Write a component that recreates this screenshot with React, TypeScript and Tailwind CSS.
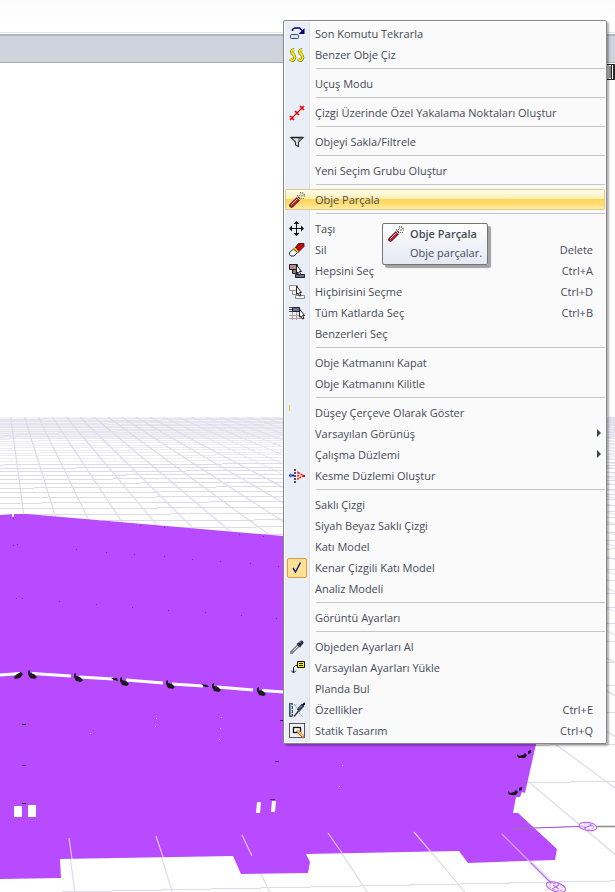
import React from 'react';

interface MenuItem {
  label: string;
  icon?: React.ReactNode;
  shortcut?: string;
  submenu?: boolean;
  checked?: boolean;
  active?: boolean;
}

function Icon({ children }: { children: React.ReactNode }) {
  return (
    <svg viewBox="0 0 16 16" className="size-4 shrink-0" fill="none" aria-hidden="true">
      {children}
    </svg>
  );
}

const RepeatIcon = () => (
  <Icon>
    <path d="M3.500 5V3.500L5.500 2h5L13 4.500" stroke="#00007b" strokeWidth="1.500" />
    <path d="M15.500 2v6H9.500z" fill="#00007b" />
    <rect x="1.500" y="8.500" width="8" height="4" rx="1" fill="#d5e3f2" stroke="#34506f" />
  </Icon>
);

const SimilarIcon = () => (
  <Icon>
    {[0, 8].map(x => (
      <g key={x} transform={`translate(${x} 0)`}>
        <path d="M5 2.500C2.500 3 2 5 3.500 6.500S6.500 9 5.500 11.500 3 14 1 12" stroke="#5c5c20" strokeWidth="3" />
        <path d="M5 2.500C2.500 3 2 5 3.500 6.500S6.500 9 5.500 11.500 3 14 1 12" stroke="#fff200" strokeWidth="1.800" />
      </g>
    ))}
  </Icon>
);

const SnapIcon = () => (
  <Icon>
    <path d="M1 15 15 1" stroke="#222" />
    <path d="M1 11l4 4M1 15l4-4M6 6l4 4M6 10l4-4M11 1l4 4M11 5l4-4" stroke="#f00000" strokeWidth="1.600" />
  </Icon>
);

const FilterIcon = () => (
  <Icon>
    <path d="M2 3.500h12L9.500 8v4.500L6.500 11V8z" fill="#dfe5e2" stroke="#3a3a44" strokeWidth="1.200" />
    <path d="M9 4l4 0L9 8z" fill="#8b93a0" />
    <path d="M2 3.500h12" stroke="#222" strokeWidth="1.500" />
  </Icon>
);

const ExplodeIcon = () => (
  <Icon>
    <path d="M2.500 13.500 9 7" stroke="#3a0a10" strokeWidth="4.500" strokeLinecap="round" />
    <path d="M2.500 13.500 9 7" stroke="#d02435" strokeWidth="2.800" strokeLinecap="round" />
    <path d="M2.500 12.500 8 7" stroke="#f7c4c6" />
    <path d="M8 5l3 3" stroke="#eee" />
    <path d="M8 3l1 1M11 0l1 1M10 4l1-1M14 0l-1 2M16 2l-2 1M12 4l2 0M14 6l1 1M11 2l1 0M12 6l1 1M15 4l1 0" stroke="#6f6b62" />
  </Icon>
);

const MoveIcon = () => (
  <Icon>
    <path d="M7.500 2v12M2 7.500h12" stroke="#111" />
    <path d="M7.500 0l3 3h-6zM7.500 15l3-3h-6zM0 7.500l3-3v6zM15 7.500l-3-3v6z" fill="#111" />
  </Icon>
);

const EraserIcon = () => (
  <Icon>
    <path d="M9.500 1.500H15v3L8.500 11 5 7z" fill="#f00000" stroke="#111" strokeWidth=".8" />
    <path d="M6.500 6.500 11.500 2M8 8.500l6.500-6" stroke="#300" strokeWidth=".9" />
    <path d="M4.500 7 6 5.500 9.500 9.500 8.500 11z" fill="#ffe800" />
    <path d="M.5 10.500 4.500 7l4 3.500-3.500 3.500H2L.5 12.500z" fill="#fff" stroke="#111" strokeWidth=".9" />
  </Icon>
);

function SelectIcon({ filled }: { filled?: boolean }) {
  const line = filled ? '#222' : '#8f8f8f';
  return (
    <Icon>
      <path d="M.5 1.500h8v5h-8z" fill={filled ? '#b98a94' : '#f4f4f4'} stroke={line} />
      <path d="M3.500 6.500h5v4h-5z" fill={filled ? '#9c7684' : '#f4f4f4'} stroke={line} />
      <path d="M6.500 11.500h9v3h-9z" fill={filled ? '#6a6d9c' : '#f4f4f4'} stroke={line} />
      <path d="M7.500 2v8l1.500-1 1.500 3 1.500-.5-1.500-3h2z" fill="#fff" stroke="#111" strokeWidth=".9" />
    </Icon>
  );
}

const FloorsIcon = () => (
  <Icon>
    <path d="M0 6.500h12M0 10.500h12M3.500 7v8M7.500 7v8M11.500 7v6M0 13.500h13" stroke="#b59a9a" />
    <path d="M3.500 2.500h7v4h-7z" fill="#6a6d9c" stroke="#222" />
    <path d="M0 2.500h3M0 4.500h3M0 6.500h3" stroke="#444" />
    <path d="M10.500 4v8l1.500-1 1.500 3 1.500-.5-1.500-3h2z" fill="#fff" stroke="#111" strokeWidth=".9" />
  </Icon>
);

const SectionIcon = () => (
  <Icon>
    <path d="M0 7.500h5" stroke="#0020e0" strokeWidth="2" />
    <path d="M1 5v5L3 7.500z" fill="#5f7be0" />
    <path d="M6 1v14" stroke="#111" strokeWidth="1.400" strokeDasharray="2 1" />
    <path d="M9 4.500 14.500 7.500 9 11z" stroke="#f01818" strokeWidth="1.400" strokeDasharray="2 1" fill="#fbd9d9" />
    <rect x="14" y="7" width="2" height="2" fill="#e00000" />
  </Icon>
);

const CheckIcon = () => (
  <span className="flex size-5 items-center justify-center rounded-xs border border-[#f29536] bg-[#ffe294]">
    <Icon>
      <path d="M4 8 6.500 12 11.500 2.500" stroke="#1f2a80" strokeWidth="1.600" />
    </Icon>
  </span>
);

const PickIcon = () => (
  <Icon>
    <path d="M2.500 13.500 9 7" stroke="#333" strokeWidth="2.800" />
    <path d="M3 13 9.500 6.500" stroke="#f4f4f4" strokeWidth="1.200" />
    <path d="M8 4.500 11.500 8" stroke="#111" strokeWidth="1.200" />
    <path d="M10.500 5.500 12.500 3.500" stroke="#25304e" strokeWidth="4" strokeLinecap="round" />
    <path d="M10.500 4 12 2.500" stroke="#9aa7c4" />
    <rect x="1" y="12" width="3" height="3" fill="#888" />
  </Icon>
);

const LoadIcon = () => (
  <Icon>
    <path d="M8.500 1.500h7v6h-7z" fill="#fff000" stroke="#111" />
    <path d="M10 3.500h4M10 5.500h4" stroke="#111" />
    <path d="M8 5.500H6.500L4.500 7.500v5M2 10.500l2.500 2.500L7 10.500" stroke="#111" />
  </Icon>
);

const PropertiesIcon = () => (
  <Icon>
    <path d="M.5 1.500h3v13h-3z" fill="#7c93a9" stroke="#3b5168" />
    <path d="M2 3.500h2M2 5.500h1M2 7.500h2M2 9.500h1M2 11.500h2" stroke="#e2eaf1" />
    <path d="M5 2l4 5M8 9l6 6M6 4l2-2" stroke="#9a9a9a" strokeDasharray="2 1" />
    <path d="M5 14.500 10 8.500" stroke="#444" strokeWidth="1.600" />
    <path d="M9 8.500 14 3" stroke="#27415c" strokeWidth="3.600" />
    <path d="M13.500 3.500 16 1" stroke="#111" strokeWidth="2" />
    <path d="M10 6.500l3-3" stroke="#8fa8c0" />
  </Icon>
);

const StaticIcon = () => (
  <Icon>
    <rect x=".5" y=".5" width="15" height="14" fill="#eef0f4" stroke="#555" />
    <rect x="4.500" y="4.500" width="7" height="5" fill="#fff" stroke="#111" strokeWidth="1.300" />
    <path d="M8 7.500l7 7" stroke="#a5642c" strokeWidth="3" />
    <path d="M8 7l6.500 6.500" stroke="#f5bd72" strokeWidth="1.800" />
  </Icon>
);

const menuGroups: MenuItem[][] = [
  [
    { label: 'Son Komutu Tekrarla', icon: <RepeatIcon /> },
    { label: 'Benzer Obje Çiz', icon: <SimilarIcon /> }
  ],
  [{ label: 'Uçuş Modu' }],
  [{ label: 'Çizgi Üzerinde Özel Yakalama Noktaları Oluştur', icon: <SnapIcon /> }],
  [{ label: 'Objeyi Sakla/Filtrele', icon: <FilterIcon /> }],
  [{ label: 'Yeni Seçim Grubu Oluştur' }],
  [{ label: 'Obje Parçala', icon: <ExplodeIcon />, active: true }],
  [
    { label: 'Taşı', icon: <MoveIcon /> },
    { label: 'Sil', icon: <EraserIcon />, shortcut: 'Delete' },
    { label: 'Hepsini Seç', icon: <SelectIcon filled />, shortcut: 'Ctrl+A' },
    { label: 'Hiçbirisini Seçme', icon: <SelectIcon />, shortcut: 'Ctrl+D' },
    { label: 'Tüm Katlarda Seç', icon: <FloorsIcon />, shortcut: 'Ctrl+B' },
    { label: 'Benzerleri Seç' }
  ],
  [{ label: 'Obje Katmanını Kapat' }, { label: 'Obje Katmanını Kilitle' }],
  [
    {
      label: 'Düşey Çerçeve Olarak Göster',
      icon: <Icon><path d="M.5 0v6" stroke="#e8cf3a" /></Icon>
    },
    { label: 'Varsayılan Görünüş', submenu: true },
    { label: 'Çalışma Düzlemi', submenu: true },
    { label: 'Kesme Düzlemi Oluştur', icon: <SectionIcon /> }
  ],
  [
    { label: 'Saklı Çizgi' },
    { label: 'Siyah Beyaz Saklı Çizgi' },
    { label: 'Katı Model' },
    { label: 'Kenar Çizgili Katı Model', icon: <CheckIcon />, checked: true },
    { label: 'Analiz Modeli' }
  ],
  [{ label: 'Görüntü Ayarları' }],
  [
    { label: 'Objeden Ayarları Al', icon: <PickIcon /> },
    { label: 'Varsayılan Ayarları Yükle', icon: <LoadIcon /> },
    { label: 'Planda Bul' },
    { label: 'Özellikler', icon: <PropertiesIcon />, shortcut: 'Ctrl+E' },
    { label: 'Statik Tasarım', icon: <StaticIcon />, shortcut: 'Ctrl+Q' }
  ]
];

function MenuRow({ item }: { item: MenuItem }) {
  return (
    <button
      type="button"
      role={item.checked ? 'menuitemcheckbox' : 'menuitem'}
      aria-checked={item.checked}
      aria-haspopup={item.submenu ? 'menu' : undefined}
      className={
        item.active
          ? 'flex h-[21px] w-full items-center rounded-xs bg-[linear-gradient(#fffef4,#fdeeb4_48%,#ffd754_50%,#ffdf7c_75%,#fff0b4)] text-left inset-ring inset-ring-[#dccb84]'
          : 'flex h-[21px] w-full items-center text-left'
      }
    >
      <span className="flex w-6 shrink-0 justify-center">{item.icon}</span>
      <span className="grow pt-0.5 pl-1.5 whitespace-nowrap">{item.label}</span>
      {item.shortcut && <span className="pt-0.5 pr-3">{item.shortcut}</span>}
      {item.submenu && (
        <svg viewBox="0 0 4 8" className="mr-1 mb-0.5 h-2 w-1" aria-hidden="true">
          <path d="M0 0l4 4-4 4z" fill="#3d4450" />
        </svg>
      )}
    </button>
  );
}

function ContextMenu() {
  return (
    <div
      role="menu"
      className="absolute top-5 left-[283px] w-[324px] rounded-xs border border-[#868686] bg-white p-px shadow-[2px_2px_2px_rgba(0,0,0,0.3)]"
    >
      <div className="bg-linear-to-r from-[#e9eef7] from-[24px] via-[#c5c5c5] via-[24px] to-[#fafafa] to-[25px] py-px">
        {menuGroups.map((group, i) => (
          <React.Fragment key={i}>
            {i > 0 && <div role="separator" className="mt-[3px] mb-1 ml-[31px] h-px bg-[#c5c5c5]" />}
            {group.map(item => (
              <MenuRow key={item.label} item={item} />
            ))}
          </React.Fragment>
        ))}
      </div>
    </div>
  );
}

function Tooltip() {
  return (
    <div
      role="tooltip"
      className="absolute top-[223px] left-[382px] flex gap-1.5 rounded-xs border border-[#767676] bg-linear-to-b from-white to-[#e4e8f3] px-[5px] pb-0.5 shadow-[3px_3px_1px_rgba(0,0,0,0.35)]"
    >
      <div className="pt-0.5">
        <ExplodeIcon />
      </div>
      <div className="leading-[19px] whitespace-nowrap">
        <p className="font-semibold">Obje Parçala</p>
        <p>Obje parçalar.</p>
      </div>
    </div>
  );
}

// Ground grid seen in perspective, both line families meet on this level
const VANISH_Y = 338;
const FAR_Y = 417;

const depthLines = Array.from({ length: 44 }, (_, i) => {
  const slope = 0.135 + 0.176 * i;
  return { x1: slope * (FAR_Y - VANISH_Y), x2: slope * (900 - VANISH_Y) };
});

const crossLines = Array.from({ length: 53 }, (_, n) => {
  const h = 1 / (0.001842 + 0.000207 * n);
  return { y1: VANISH_Y + h * (1 + 615 / 27000), y2: VANISH_Y + h, opacity: n > 30 ? 0.55 : 1 };
});

const joints = [
  [28, 674], [74, 677], [120, 681], [166, 684], [212, 687], [257, 691]
];

const specks = [
  [13, 518], [13, 545], [17, 544], [76, 549], [106, 552], [134, 554], [164, 556], [192, 559], [220, 561],
  [250, 563], [278, 566], [16, 598], [22, 598], [59, 601], [96, 604], [132, 607], [168, 610], [205, 612],
  [241, 615], [276, 618], [140, 525], [164, 527], [239, 534], [263, 536]
];

const sparks = [
  [156, 718], [155, 726], [90, 733], [221, 717], [220, 728], [219, 739], [342, 765], [339, 786]
];

function Scene() {
  return (
    <svg
      viewBox="0 63 615 829"
      preserveAspectRatio="xMinYMin slice"
      className="absolute inset-0 size-full"
      aria-hidden="true"
    >
      <path d="M0 417h615v22H0z" fill="#f1f1f6" />
      <g stroke="#dddbea">
        {crossLines.map((l, i) => (
          <line key={i} x1="0" y1={l.y1} x2="615" y2={l.y2} opacity={l.opacity} shapeRendering="crispEdges" />
        ))}
        {depthLines.map((l, i) => (
          <line key={i} x1={l.x1} y1={FAR_Y} x2={l.x2} y2="900" strokeWidth={i > 10 ? 0.8 : 1.2} />
        ))}
      </g>

      {/* building */}
      <path
        d="M0 515 14 514H27L283 536 560 600 536 744 525 793 522 792 520 797H516L513 813H518L557 849 555 860 468 863 459 851 306 854 310 862 308 873 241 874 233 856 60 859 61 878 0 879z"
        fill="#b84bff"
      />
      <g stroke="#dcc6f5" strokeWidth="1.200">
        <path d="M69 838 72 859M156 836 163 857M242 835 252 856M328 833 342 853M414 832 431 852" />
        <path d="M502 834 531 863" stroke="#d9a8fb" />
        <path d="M531 863 551 883" stroke="#b66cf0" />
      </g>

      <path
        d="M0 675 20 673.500M32 673.500 71 676M79 677 113 679M126 680 163 683M172 684 203 686M217 687 253 690M262 690.500 284 692"
        stroke="#fff"
        strokeWidth="3"
      />
      <g fill="#1b1b1b">
        <path d="M14 677l3-3 4-2 2 2-3 4-5 1z" />
        {joints.map(([x, y]) => (
          <path key={x} d={`M${x} ${y - 3}l2-1 0 3 4 1 3 3-2 2-5-1-2-4z`} />
        ))}
        <path d="M111 678l6 0 1 3-4-1zM201 684l6 1 2 2-4 0z" />
      </g>
      <g stroke="#222">
        <path d="M22 724.500h4M280 720.500h4M22 803.500h4" />
        <path d="M22 765.500h4M275 761.500h4M270 799.500h5" stroke="#57207a" />
      </g>
      <g fill="#fff">
        <path d="M14 806h8v11h-8zM28 805h8v12h-8zM257 802h4l-1 11h-4zM272 801h4l-1 11h-4z" />
        <path d="M12 514h2v3h-2z" />
      </g>
      <g fill="#702b9c">
        {specks.map(([x, y]) => <rect key={`${x}-${y}`} x={x} y={y} width="1" height="1" />)}
      </g>
      <g fill="#e3bdff">
        {sparks.map(([x, y]) => <rect key={`${x}-${y}`} x={x} y={y} width="1" height="1" />)}
      </g>

      <g fill="#151515">
        <path d="M517 754l2 2 4-1 2-2 2 2-2 3h-6l-2-2zM528 751l3-1 0 3-3 1z" />
        <path d="M508 791l2 2 4-1 2-2 2 2-2 3h-6l-2-2zM519 788l3-1 0 3-3 1z" />
      </g>

      {/* axis bubbles */}
      <path d="M513 828.500 534 828" stroke="#8e7a9c" />
      <path d="M534 828 579 826.500" stroke="#a24de0" />
      <path d="M597 826.500H615" stroke="#8a8a8a" strokeWidth="1.500" />
      <g stroke="#b44cf5" fill="none">
        <ellipse cx="588" cy="826.500" rx="9" ry="4" transform="rotate(8 588 826)" />
        <ellipse cx="588" cy="826.500" rx="6" ry="2.500" transform="rotate(8 588 826)" strokeDasharray="3 1" strokeWidth=".6" />
        <path d="M584 828l8-3" />
        <ellipse cx="556" cy="887" rx="10" ry="4.500" transform="rotate(18 556 887)" />
        <ellipse cx="556" cy="887" rx="7" ry="3" transform="rotate(18 556 887)" strokeDasharray="3 1" strokeWidth=".6" />
        <path d="M552 889l7-4M553 885l6 4" />
      </g>

      {/* view cube corner */}
      <path d="M604 64.500h11M604 79.500h11" stroke="#222" />
      <path d="M606 65h3v14h-3z" fill="#c9c9c9" />
      <path d="M609 66h2v12h-2z" fill="#8d8d8d" />
      <path d="M611.500 64v16" stroke="#222" />
      <path d="M613 64h2v16h-2z" fill="#2b2b2b" />
    </svg>
  );
}

export default function App() {
  return (
    <div className="relative flex min-h-screen flex-col overflow-hidden bg-white font-['Open_Sans','Noto_Sans',sans-serif] text-[11px] text-[#474b58]">
      <header>
        <div className="h-[33px] border-b border-[#e3e6e6] bg-linear-to-b from-[#fcfcfc] to-white" />
        <div className="mt-px h-[29px] border-t-2 border-b border-t-[#adb5be] border-b-[#a9adb8] bg-[#cfd3dd]" />
      </header>
      <main className="relative grow">
        <Scene />
      </main>
      <ContextMenu />
      <Tooltip />
    </div>
  );
}
